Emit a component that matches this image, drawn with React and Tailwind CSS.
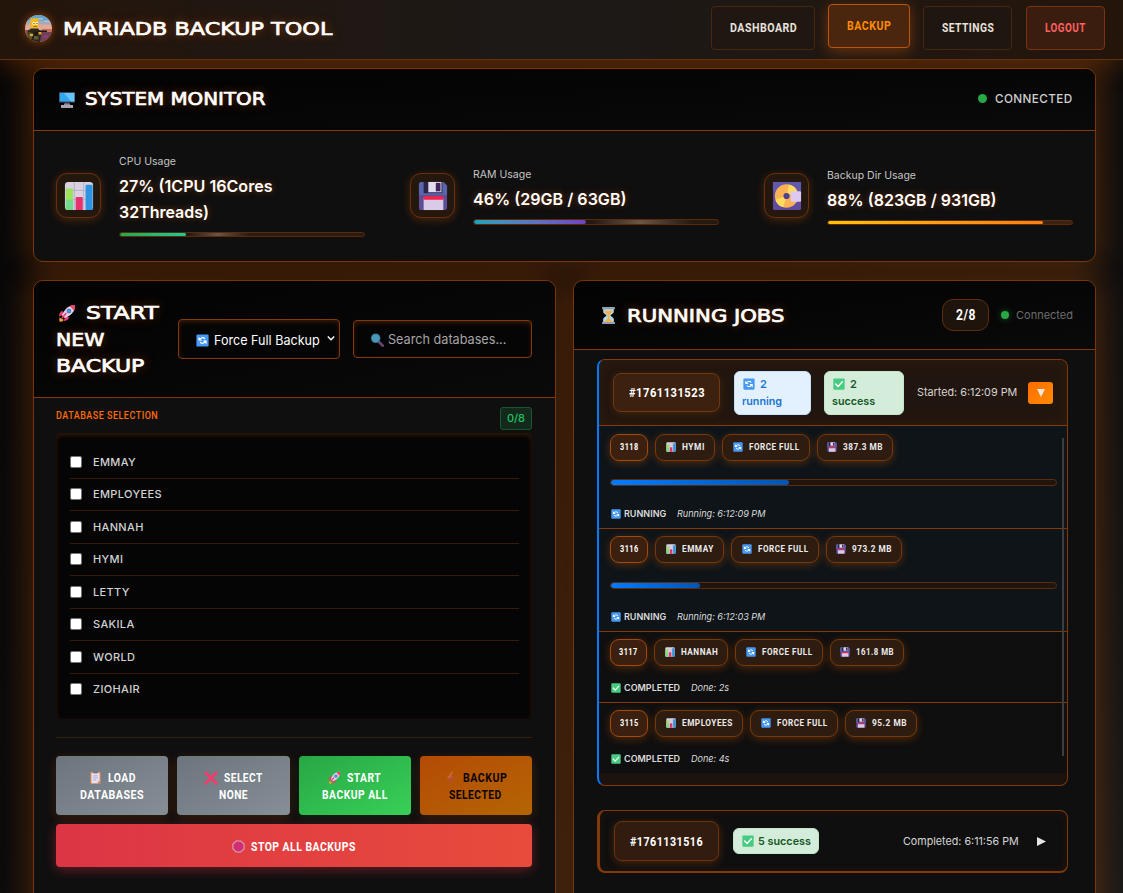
import React, { useLayoutEffect, useRef, useState } from "react";

/* Single-line label that is stretched or condensed horizontally to a set width. */
function Fit({ w, children, className = "" }) {
  const ref = useRef(null);
  const [scale, setScale] = useState(1);
  useLayoutEffect(() => {
    const natural = ref.current.offsetWidth;
    if (natural) setScale(w / natural);
  }, [w]);
  return (
    <span className="inline-block whitespace-nowrap text-left" style={{ width: w }}>
      <span ref={ref} className={"inline-block origin-left " + className} style={{ transform: `scaleX(${scale})` }}>
        {children}
      </span>
    </span>
  );
}

const display =
  "font-['DejaVu_Sans',sans-serif] font-normal text-white [-webkit-text-stroke:0.7px_#fff] [text-shadow:0_0_9px_rgba(255,107,0,0.5)]";
const tech = "font-['Roboto',sans-serif] font-bold tracking-[0.6px]";

/* ---------- icons ---------- */
const Svg = ({ className, children }) => (
  <svg viewBox="0 0 32 32" className={"shrink-0 " + className}>{children}</svg>
);

const Monitor = ({ className }) => (
  <Svg className={className}>
    <path d="M10 23h12v4H10z" fill="#8d879b" />
    <path d="M4 26h24v6H4z" fill="#aaa2b5" />
    <path d="M12 21h8v3h-8z" fill="#635b70" />
    <rect x="0" y="0" width="32" height="21" rx="1" fill="#46445c" />
    <path d="M1.500 2h29v17h-29z" fill="#2fa8f0" />
    <path d="M10 2h20.500v17H24z" fill="#63c5fa" />
  </Svg>
);
const Chart = ({ className }) => (
  <Svg className={className}>
    <rect x="1" y="1" width="30" height="30" rx="3.500" fill="#d8d2e3" />
    <path d="M1 10h30M1 20h30M11 1v30M21 1v30" stroke="#b5aec4" strokeWidth="1" />
    <rect x="2" y="8" width="7.500" height="23" rx="1" fill="#9be35b" />
    <rect x="2" y="20" width="7.500" height="11" rx="1" fill="#6fdc8a" />
    <rect x="12.500" y="17" width="7.500" height="14" rx="1" fill="#e8326f" />
    <rect x="23" y="4" width="7.500" height="27" rx="1" fill="#2f93e4" />
  </Svg>
);
const Floppy = ({ className }) => (
  <Svg className={className}>
    <path d="M3 1h24l4 4v23a3 3 0 0 1-3 3H3a2 2 0 0 1-2-2V3a2 2 0 0 1 2-2z" fill="#5b4d96" />
    <path d="M1 3v12h30V5l-4-4H3z" fill="#5866ac" />
    <path d="M6 1h20v12H6z" fill="#2c234b" />
    <path d="M11 1h14v11H11z" fill="#e3dced" />
    <path d="M19 2h5v9h-5z" fill="#41245c" />
    <path d="M6 18h21v13H6z" fill="#d9cae8" />
    <path d="M6 16h21v4H6z" fill="#ed254e" />
  </Svg>
);
const MiniDisc = ({ className }) => (
  <Svg className={className}>
    <rect x="1" y="1" width="30" height="30" rx="2" fill="#5e4b9c" />
    <path d="M1 1h30v10H1z" fill="#6259ad" />
    <circle cx="15.500" cy="16" r="12.500" fill="#fbb256" />
    <path d="M15.500 16 18 3.700A12.500 12.500 0 0 1 27 11zM15.500 16 3.500 20A12.500 12.500 0 0 0 12 28z" fill="#ffdc60" />
    <circle cx="15.500" cy="16" r="3.300" fill="#51408e" />
    <rect x="20" y="11" width="11" height="11" rx="1" fill="#decaf0" />
  </Svg>
);
const Rocket = ({ className }) => (
  <Svg className={className}>
    <path d="M3 24c-1 3-1 5 0 7 3 1 6 0 7-3z" fill="#ff9b35" />
    <path d="M8 12c-5 2-6 6-6 10l8-3zM20 24c-2 5-6 6-10 6l3-8z" fill="#ef3d72" />
    <path d="M29 2C19 2 12 8 7 20l5 5C24 20 30 13 30 3z" fill="#d9d4e9" />
    <path d="M30 2c-4-.3-7 .2-9.500 1.500l8 8C29.800 9 30.300 6 30 2z" fill="#f0446d" />
    <circle cx="19.500" cy="12.500" r="4" fill="#6653a0" />
    <circle cx="19.500" cy="12.500" r="2.700" fill="#3aa6f2" />
    <path d="M8 24l6-7" stroke="#ef3d72" strokeWidth="3" strokeLinecap="round" />
  </Svg>
);
const Refresh = ({ className }) => (
  <Svg className={className}>
    <rect x="1" y="1" width="30" height="30" rx="3" fill="#4598f3" />
    <path d="M9 15c1-6 9-8 13-3M23 17c-1 6-9 8-13 3" fill="none" stroke="#fff" strokeWidth="3.200" />
    <path d="M6 7v9h9zM26 25v-9h-9z" fill="#fff" />
  </Svg>
);
const Search = ({ className }) => (
  <Svg className={className}>
    <path d="m20 20 9 9" stroke="#6b4672" strokeWidth="6" strokeLinecap="round" />
    <circle cx="13" cy="12" r="11" fill="#41638b" />
    <circle cx="13" cy="12" r="9" fill="#4798b8" />
  </Svg>
);
const Hourglass = ({ className }) => (
  <Svg className={className}>
    <path d="M6 3h20v6c0 4-6 5-6 7s6 3 6 7v6H6v-6c0-4 6-5 6-7s-6-3-6-7z" fill="#b4d7ea" />
    <path d="M8 7h16c0 4-6 6-6.500 9h-3C14 13 8 11 8 7zM15 16h2l1 6 6 6H8l6-6z" fill="#f5b04c" />
    <path d="M4 0h24v4H4zM4 28h24v4H4z" fill="#93a0ad" />
  </Svg>
);
const Clipboard = ({ className }) => (
  <Svg className={className}>
    <rect x="3" y="2" width="26" height="30" rx="2" fill="#c88862" />
    <path d="M6 5h20v20l-5 5H6z" fill="#e9e1f4" />
    <path d="M26 25h-5v5z" fill="#b9aacb" />
    <rect x="10" y="0" width="12" height="6" rx="2" fill="#7b7388" />
    <path d="M10 12h12M10 17h12M10 22h8" stroke="#aaa0bd" strokeWidth="2" />
  </Svg>
);
const Cross = ({ className }) => (
  <Svg className={className}>
    <path d="M4 4l24 24M28 4 4 28" stroke="#f8396b" strokeWidth="6" strokeLinecap="round" />
  </Svg>
);
const Bolt = ({ className }) => (
  <Svg className={className}>
    <path d="M19 1 7 18h7l-3 13L26 13h-9l6-12z" fill="#c8682c" />
    <path d="m14 18-3 13L26 13h-5z" fill="#b0474a" />
  </Svg>
);
const StopSign = ({ className }) => (
  <Svg className={className}>
    <path d="M10 1h12l9 9v12l-9 9H10l-9-9V10z" fill="#d5a8c4" />
    <path d="M11 3.500h10l7.500 7.500v10L21 28.500H11L3.500 21V11z" fill="#cf2f70" />
  </Svg>
);
const Check = ({ className }) => (
  <Svg className={className}>
    <rect x="1" y="1" width="30" height="30" rx="2.500" fill="#46cb80" />
    <path d="m7 16 6.500 6.500L25 10" fill="none" stroke="#fff" strokeWidth="3.600" strokeLinecap="round" strokeLinejoin="round" />
  </Svg>
);
const Avatar = () => (
  <svg viewBox="0 0 54 54" className="h-[27px] w-[27px] shrink-0 rounded-full shadow-[0_0_9px_rgba(255,107,0,0.5)]">
    <rect width="54" height="54" fill="#e3a992" />
    <rect width="54" height="13" fill="#5fa3cc" />
    <path d="M0 11h54v8H0z" fill="#a3a9bf" />
    <path d="M26 6h10v3H26zM38 11h10v3H38z" fill="#a8c4d4" />
    <path d="M28 31h26v23H28z" fill="#6f4058" />
    <path d="M34 28h20v6H34z" fill="#c9705c" />
    <path d="M0 30h14v24H0z" fill="#8b5252" />
    <path d="M11 9l2-3 2 2 3-3 2 3 3-3 2 3 2-1v18l-4 2h-9l-3-3z" fill="#f7b916" />
    <circle cx="17.500" cy="17" r="2.800" fill="#fff8e0" />
    <circle cx="23.500" cy="17" r="2.800" fill="#fff8e0" />
    <path d="M17 16h2v2h-2zM23 16h2v2h-2zM17 23h7v1h-7z" fill="#3a2b10" />
    <path d="M5 32l7-5h14l7 8-3 19H7z" fill="#2a281c" />
    <path d="M8 34l8 3-3 12-7-6zM18 42h9v7h-9z" fill="#5d5930" />
    <path d="M18 35l14-4h12v3h-8l-15 8z" fill="#18171c" />
    <path d="M27 34h6v5h-6zM10 38h6v4h-6z" fill="#eba91f" />
    <path d="M37 41h9v4h-9z" fill="#8e4184" />
  </svg>
);

/* ---------- building blocks ---------- */
const glow =
  "before:absolute before:inset-0 before:-z-10 before:rounded-[10px] before:shadow-[0_0_30px_7px_rgba(255,107,0,0.23)] before:content-['']";

function Panel({ className = "", children }) {
  return (
    <section className={"relative rounded-[10px] border border-[#7a3608] bg-[#0f0f0f] " + glow + " " + className}>
      {children}
    </section>
  );
}

const panelHead = "rounded-t-[9px] border-b border-[#84390a] bg-gradient-to-br from-[#030303] to-[#0a0a0a]";

function Metric({ icon, label, children, bar, lift = "" }) {
  return (
    <div className="flex w-[309px] items-center gap-[18px]">
      <div className="flex h-[45px] w-[45px] shrink-0 items-center justify-center rounded-[11px] border border-[#6b300b] bg-[#24170e] shadow-[0_2px_9px_rgba(255,107,0,0.25)]">
        {icon}
      </div>
      <div className={"w-[246px] " + lift}>
        <div className="text-[10.5px] leading-[18px] text-[#c4c4c4]">{label}</div>
        <div className="mt-[2px] text-[16.500px] font-semibold leading-[26px] text-white [text-shadow:0_0_8px_rgba(255,107,0,0.4)]">
          {children}
        </div>
        {bar}
      </div>
    </div>
  );
}

function NavItem({ w, tw, children, className }) {
  return (
    <a className={"flex h-11 items-center justify-center rounded-[4px] border text-[13px] " + className} style={{ width: w }}>
      <Fit w={tw} className={tech}>{children}</Fit>
    </a>
  );
}

function Pill({ w, tw, icon, children, id }) {
  return (
    <span
      className={
        "flex h-[27px] items-center justify-center gap-[6px] rounded-[9px] border pb-px text-[9.500px] leading-none shadow-[0_2px_9px_rgba(255,107,0,0.28)] " +
        (id ? "border-[#a34a0c] bg-[#3b200f] text-white" : "border-[#783909] bg-[#2e1c11] text-[#ececec]")
      }
      style={{ width: w }}
    >
      {icon}
      <Fit w={tw} className={tech}>{children}</Fit>
    </span>
  );
}

const mini = "h-[10px] w-[10px]";

function Row({ id, idw = 38, name, nw, ntw, fill, size, sw, stw, status, time, timew, last, h, mt, barMt = "mt-[18px]" }) {
  const running = status === "RUNNING";
  return (
    <div
      className={"flex flex-col pl-[11px] pr-[10px] " + (last ? "" : "border-b border-[#84390a] ") + (running ? "bg-[#0e1418]" : "bg-[#0f0f0f]")}
      style={{ height: h, paddingTop: mt }}
    >
      <div className="flex gap-[7px]">
        <Pill id w={idw} tw={18.5}>{id}</Pill>
        <Pill w={nw} tw={ntw} icon={<Chart className={mini} />}>{name}</Pill>
        <Pill w={88} tw={51} icon={<Refresh className={mini} />}>FORCE FULL</Pill>
        <Pill w={sw} tw={stw} icon={<Floppy className={mini} />}>{size}</Pill>
      </div>
      {running && (
        <div className={"h-[7px] shrink-0 overflow-hidden rounded-[4px] border border-[#5b2c0d] bg-[#1f150e] " + barMt}>
          <div className="h-full rounded-[3px] bg-gradient-to-r from-[#007bff] to-[#0056b3]" style={{ width: fill }} />
        </div>
      )}
      <div className={"flex items-center leading-[14px] " + (running ? "mt-[21px]" : "mt-[15px]")}>
        {running ? <Refresh className="ml-[1px] h-[10px] w-[10px]" /> : <Check className="ml-[1px] h-[10px] w-[10px]" />}
        <span className="ml-[3px] text-[9px] font-semibold text-[#dcdcdc]">
          <Fit w={running ? 42 : 56}>{status}</Fit>
        </span>
        <span className="ml-[11px] text-[9.300px] italic text-[#dcdcdc]">
          <Fit w={timew}>{time}</Fit>
        </span>
      </div>
    </div>
  );
}

const databases = ["EMMAY", "EMPLOYEES", "HANNAH", "HYMI", "LETTY", "SAKILA", "WORLD", "ZIOHAIR"];

function ActionButton({ icon, a, aw, b, bw, className }) {
  return (
    <button className={"flex h-[59px] flex-1 flex-col items-center justify-center rounded-[4px] pt-[1px] text-[13px] leading-4 " + className}>
      <span className="flex items-center gap-[6px]">
        {icon}
        <Fit w={aw} className={tech}>{a}</Fit>
      </span>
      <Fit w={bw} className={tech}>{b}</Fit>
    </button>
  );
}

export default function App() {
  return (
    <div className="relative isolate flex h-[893px] w-full flex-col overflow-hidden bg-gradient-to-br from-[#070707] via-[#0b0b0b] to-[#181818] font-['Inter',sans-serif] text-white">
      <header className="relative flex h-[60px] shrink-0 items-center border-b border-[#64310f] bg-gradient-to-r from-[#24150b] via-[#1c1917] to-[#24150b] pl-[25px] pr-[18px] before:absolute before:inset-0 before:-z-10 before:shadow-[0_3px_30px_rgba(255,107,0,0.33)] before:content-['']">
        <div className="-mt-[2px] flex items-center gap-[11px]">
          <Avatar />
          <h1 className="text-[18px]">
            <Fit w={269} className={display}>MARIADB BACKUP TOOL</Fit>
          </h1>
        </div>
        <nav className="-mt-[3px] ml-auto flex">
          <NavItem w={104} tw={67} className="border-[#46270f] bg-[#201713] text-[#e8e1dc]">DASHBOARD</NavItem>
          <NavItem w={82} tw={44} className="-mt-[2px] mb-[2px] ml-[13px] border-[#b9560c] bg-[#4a260f] text-[#ff8c00] shadow-[0_3px_14px_rgba(255,107,0,0.35)]">BACKUP</NavItem>
          <NavItem w={89} tw={52} className="ml-[13px] border-[#46270f] bg-[#201610] text-[#e8e1dc]">SETTINGS</NavItem>
          <NavItem w={79} tw={41} className="ml-[14px] border-[#7b330f] bg-[#3a1d0f] text-[#ff6161]">LOGOUT</NavItem>
        </nav>
      </header>

      <main className="flex flex-col pl-[33px] pr-[27px] pt-2">
        <Panel className="h-[194px]">
          <div className={"flex h-[62px] items-center justify-between px-[22px] " + panelHead}>
            <div className="flex items-center">
              <Monitor className="ml-[3px] h-4 w-4" />
              <h2 className="ml-[10px] text-[17px]">
                <Fit w={181} className={display}>SYSTEM MONITOR</Fit>
              </h2>
            </div>
            <div className="flex items-center gap-2 pb-[2px] text-[12px] text-[#d0d0d0]">
              <span className="h-[9px] w-[9px] rounded-full bg-[#28a745]" />
              <Fit w={78} className="font-medium tracking-[0.4px]">CONNECTED</Fit>
            </div>
          </div>
          <div className="flex h-[129px] items-center justify-between px-[22px]">
            <Metric
              lift="-mt-[2px]"
              icon={<Chart className="h-[30px] w-[30px]" />}
              label="CPU Usage"
              bar={
                <div className="mt-[7px] h-[5px] overflow-hidden rounded-[3px] border border-[#572b0c] bg-gradient-to-r from-[#24180f] from-28% via-[#6d5546] via-40% to-[#2a1a10] to-53%">
                  <div className="h-full w-[27%] rounded-[2px] bg-gradient-to-r from-[#28a745] to-[#20c997]" />
                </div>
              }
            >
              <Fit w={154}>27% (1CPU 16Cores</Fit>
              <br />
              <Fit w={90}>32Threads)</Fit>
            </Metric>
            <Metric
              lift="-mt-px"
              icon={<Floppy className="h-[30px] w-[30px]" />}
              label="RAM Usage"
              bar={
                <div className="mt-[7px] h-[6px] overflow-hidden rounded-[3px] border border-[#572b0c] bg-gradient-to-r from-[#24180f] from-48% via-[#6d5546] via-68% to-[#24180f] to-90%">
                  <div className="h-full w-[46%] rounded-[2px] bg-gradient-to-r from-[#17a2b8] to-[#6f42c1]" />
                </div>
              }
            >
              <Fit w={154}>46% (29GB / 63GB)</Fit>
            </Metric>
            <Metric
              icon={<MiniDisc className="h-[30px] w-[30px]" />}
              label="Backup Dir Usage"
              bar={
                <div className="mt-[7px] h-[5px] overflow-hidden rounded-[3px] border border-[#572b0c] bg-[#382313]">
                  <div className="h-full w-[88%] rounded-[2px] bg-gradient-to-r from-[#ffc107] to-[#fd7e14]" />
                </div>
              }
            >
              <Fit w={170}>88% (823GB / 931GB)</Fit>
            </Metric>
          </div>
        </Panel>

        <div className="mt-[18px] flex justify-between">
          <Panel className="h-[660px] w-[523px]">
            <div className={"flex h-[117px] items-center px-[22px] " + panelHead}>
              <h2 className="flex w-[122px] flex-col pt-[2px] text-[17px] leading-[26.500px]">
                <span className="flex items-center">
                  <Rocket className="-mt-px ml-[2px] h-[18px] w-[18px]" />
                  <span className="ml-[10px]"><Fit w={72} className={display}>START</Fit></span>
                </span>
                <Fit w={48} className={display}>NEW</Fit>
                <Fit w={88} className={display}>BACKUP</Fit>
              </h2>
              <div className="flex h-10 w-[162px] shrink-0 items-center rounded-[4px] border border-[#853909] bg-[#050505] pl-[17px] pt-[3px] shadow-[inset_0_2px_5px_rgba(255,107,0,0.2)]">
                <Refresh className="h-[13px] w-[13px]" />
                <span className="ml-[5px] text-[13.300px]"><Fit w={106}>Force Full Backup</Fit></span>
                <svg viewBox="0 0 10 8" className="-mt-[4px] ml-[7px] h-[7px] w-[8px]">
                  <path d="m1 1.500 4 4 4-4" fill="none" stroke="#fff" strokeWidth="1.800" />
                </svg>
              </div>
              <div className="ml-[13px] flex h-[38px] w-[179px] shrink-0 items-center rounded-[4px] border border-[#853909] bg-[#050505] pl-[16px] pt-px shadow-[inset_0_2px_5px_rgba(255,107,0,0.2)]">
                <Search className="h-[14px] w-[14px]" />
                <span className="ml-[4px] text-[13.300px] text-[#a6a6a6]"><Fit w={118}>Search databases...</Fit></span>
              </div>
            </div>

            <div className="flex flex-col pl-[22px] pr-[23px]">
              <div className="flex h-[35px] items-start justify-between pt-[9px]">
                <span className="text-[11.500px] leading-[17px] text-[#ff6b0a]">
                  <Fit w={102} className="font-['Roboto',sans-serif] font-medium tracking-[0.6px]">DATABASE SELECTION</Fit>
                </span>
                <span className="flex h-[23px] w-8 items-center justify-center rounded-[3px] border border-[#1b5630] bg-[#12291b] text-[11px] font-medium text-[#27c262]">
                  0/8
                </span>
              </div>
              <div className="h-[286px] rounded-[5px] bg-[#050505] pl-[14px] pr-[13px] pt-[13px] shadow-[inset_0_2px_5px_rgba(255,107,0,0.2)]">
                {databases.map((name, i) => (
                  <div
                    key={name}
                    className={"flex h-[32.500px] items-center border-b " + (i < 7 ? "border-[#371a07]" : "border-transparent")}
                  >
                    <input type="checkbox" className="h-3 w-3 shrink-0 appearance-none rounded-[2px] border border-[#767676] bg-white" />
                    <span className="ml-[11px] text-[11px] font-medium tracking-[0.35px] text-[#d2d2d2]">{name}</span>
                  </div>
                ))}
              </div>
              <div className="mt-[18px] flex gap-[9px] border-t border-[#33200f] pt-[18px]">
                <ActionButton
                  icon={<Clipboard className="h-[13px] w-[13px]" />} a="LOAD" aw={28} b="DATABASES" bw={64}
                  className="bg-gradient-to-br from-[#6c757d] to-[#868e96] shadow-[0_3px_12px_rgba(255,107,0,0.18)]"
                />
                <ActionButton
                  icon={<Cross className="h-[14px] w-[14px]" />} a="SELECT" aw={39} b="NONE" bw={29}
                  className="bg-gradient-to-br from-[#6c757d] to-[#868e96] shadow-[0_3px_12px_rgba(255,107,0,0.18)]"
                />
                <ActionButton
                  icon={<Rocket className="h-[13px] w-[13px]" />} a="START" aw={34} b="BACKUP ALL" bw={66}
                  className="bg-gradient-to-br from-[#28a745] to-[#38d058] shadow-[0_3px_10px_rgba(40,167,69,0.12)]"
                />
                <ActionButton
                  icon={<Bolt className="h-[13px] w-[13px]" />} a="BACKUP" aw={44} b="SELECTED" bw={53}
                  className="bg-gradient-to-br from-[#b44a05] to-[#b46504] text-[#0b0502] shadow-[0_3px_12px_rgba(255,107,0,0.18)]"
                />
              </div>
              <button className="mt-[9px] flex h-[43px] items-center justify-center gap-[6px] rounded-[4px] bg-gradient-to-r from-[#dc3545] to-[#e84b3b] pt-[2px] text-[13px] shadow-[0_3px_12px_rgba(220,53,69,0.4)]">
                <StopSign className="h-[13px] w-[13px]" />
                <Fit w={105} className={tech}>STOP ALL BACKUPS</Fit>
              </button>
            </div>
          </Panel>

          <Panel className="h-[660px] w-[523px]">
            <div className={"flex h-[69px] items-center px-[22px] " + panelHead}>
              <Hourglass className="ml-[4px] h-[17px] w-[17px]" />
              <h2 className="ml-[10px] pt-[3px] text-[17px]">
                <Fit w={158} className={display}>RUNNING JOBS</Fit>
              </h2>
              <div className="ml-auto flex items-center">
                <span className="flex h-8 w-[47px] items-center justify-center rounded-[11px] border border-[#5d2d0c] bg-[#1f140c] text-[14px]">
                  <Fit w={20} className={tech}>2/8</Fit>
                </span>
                <span className="ml-[12px] h-2 w-2 rounded-full bg-[#28a745] shadow-[0_0_7px_rgba(40,167,69,0.5)]" />
                <span className="ml-[7px] text-[11px] text-[#6d6d6d]"><Fit w={57}>Connected</Fit></span>
              </div>
            </div>

            <div className="flex flex-col pl-[23px] pr-[27px] pt-[9px]">
              <article className="relative h-[427px] overflow-hidden rounded-[8px] border border-l-2 border-[#84390a] border-l-[#007bff] bg-[#1c130e]">
                <div className="flex h-[66px] items-center border-b border-[#84390a] bg-[#21160f] pl-[14px] pr-[14px] shadow-[inset_0_0_14px_rgba(255,107,0,0.07)]">
                  <span className="flex h-[39px] w-[107px] items-center justify-center rounded-[8px] border border-[#73370d] bg-[#3d210f] text-[13.500px] shadow-[0_2px_9px_rgba(255,107,0,0.15)]">
                    <Fit w={76} className={tech}>#1761131523</Fit>
                  </span>
                  <span className="ml-[14px] h-11 w-[77px] rounded-[6px] border border-[#c5dffa] bg-[#e3f1fe] pl-[7px] pt-[4px] text-[11px] font-semibold leading-[17px] text-[#1976d2]">
                    <span className="flex items-center gap-[5px] pl-[1px]"><Refresh className="h-[12px] w-[12px]" />2</span>
                    <Fit w={40}>running</Fit>
                  </span>
                  <span className="ml-[13px] h-11 w-20 rounded-[6px] border border-[#c3e6cb] bg-[#d4edda] pl-[7px] pt-[4px] text-[11px] font-semibold leading-[17px] text-[#155724]">
                    <span className="flex items-center gap-[5px] pl-[1px]"><Check className="h-[12px] w-[12px]" />2</span>
                    <Fit w={43}>success</Fit>
                  </span>
                  <span className="ml-[13px] text-[11px] text-[#d6d3d0]"><Fit w={100}>Started: 6:12:09 PM</Fit></span>
                  <span className="ml-auto flex h-[22px] w-[25px] items-center justify-center rounded-[3px] bg-gradient-to-br from-[#ff6b00] to-[#ff8c00]">
                    <svg viewBox="0 0 8 8" className="h-2 w-2"><path d="M0 0h8L4 8z" fill="#f4e8dc" /></svg>
                  </span>
                </div>
                <Row id="3118" name="HYMI" nw={60} ntw={23} size="387.3 MB" sw={76} stw={40} status="RUNNING" time="Running: 6:12:09 PM" timew={88} fill="40%" h={103} mt={8} />
                <Row id="3116" name="EMMAY" nw={69} ntw={32} size="973.2 MB" sw={76} stw={40} status="RUNNING" time="Running: 6:12:03 PM" timew={88} fill="20%" h={103} mt={7} barMt="mt-[19px]" />
                <Row id="3117" idw={37} name="HANNAH" nw={74} ntw={37} size="161.8 MB" sw={74} stw={38} status="COMPLETED" time="Done: 2s" timew={38} h={71} mt={7} />
                <Row id="3115" name="EMPLOYEES" nw={88} ntw={51} size="95.2 MB" sw={72} stw={35} status="COMPLETED" time="Done: 4s" timew={38} h={70} mt={7} last />
                <span className="absolute right-[3px] top-[78px] h-[318px] w-[2px] bg-[#3b3d40]" />
              </article>

              <article className="mt-6 flex h-[63px] items-center rounded-[8px] border border-b-2 border-l-[3px] border-[#84390a] bg-[#0f0f0f] pl-[14px] pr-[21px] shadow-[inset_0_0_12px_rgba(255,107,0,0.06)]">
                <span className="flex h-10 w-[105px] items-center justify-center rounded-[8px] border border-[#6d320b] bg-[#311c0f] text-[13.500px] shadow-[0_2px_9px_rgba(255,107,0,0.25)]">
                  <Fit w={73} className={tech}>#1761131516</Fit>
                </span>
                <span className="ml-[14px] flex h-[26px] w-[86px] items-center justify-center gap-[4px] rounded-[6px] border border-[#c3e6cb] bg-[#d4edda] text-[11px] font-semibold text-[#155724]">
                  <Check className="h-[12px] w-[12px]" />
                  <Fit w={53}>5 success</Fit>
                </span>
                <span className="ml-auto text-[11px] text-[#d6d6d6]"><Fit w={116}>Completed: 6:11:56 PM</Fit></span>
                <svg viewBox="0 0 9 9" className="ml-[18px] h-[9px] w-[9px]"><path d="M0 0l9 4.500L0 9z" fill="#e4e4e4" /></svg>
              </article>
            </div>
          </Panel>
        </div>
      </main>
    </div>
  );
}
